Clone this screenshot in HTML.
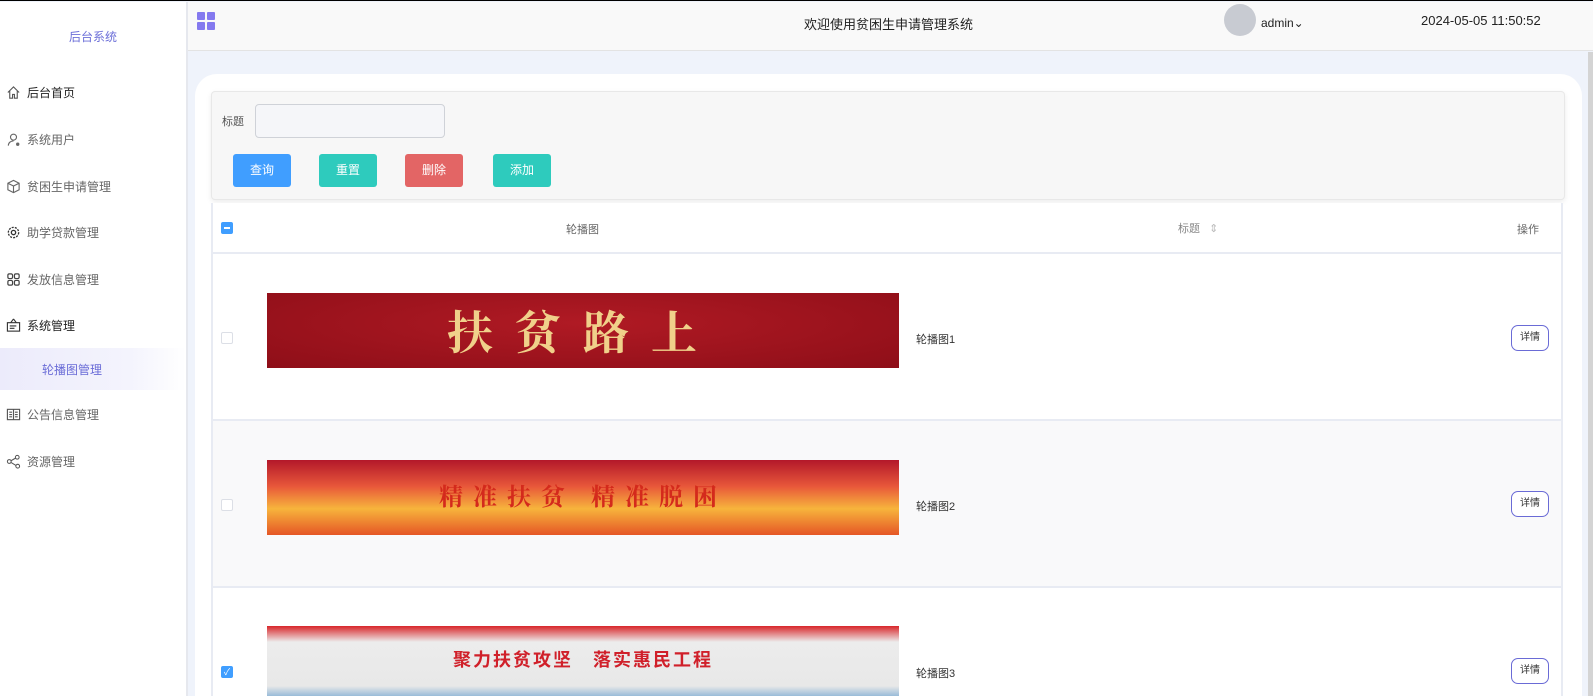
<!DOCTYPE html>
<html style="overflow:hidden;height:696px"><head><meta charset="utf-8"><style>
*{margin:0;padding:0;box-sizing:border-box}
body{width:1593px;height:696px;overflow:hidden;background:#eff3fb;font-family:"Liberation Sans","Noto Sans CJK SC",sans-serif;font-size:12px;color:#333;position:relative;border-top:1px solid #000}
.abs{position:absolute}
.side{left:0;top:1px;width:188px;height:695px;background:#fff;border-right:2px solid #e6e8ee}
.side .t{position:absolute;left:0;width:186px;top:26px;text-align:center;color:#6c6fd8;font-size:12px}
.mi{position:absolute;left:6px;font-size:12px;color:#666;display:flex;align-items:center;gap:6px}
.mi svg{width:15px;height:15px}
.hdr{left:188px;top:1px;width:1405px;height:49px;background:#f9f9f9;border-bottom:1px solid #e3e3e3}
.card{left:195px;top:73px;width:1387px;height:623px;background:#fff;border-radius:22px 22px 0 0}
.search{left:211px;top:90px;width:1354px;height:109px;background:#f7f7f7;border:1px solid #e8e8e8;border-radius:4px;box-shadow:0 2px 6px rgba(0,0,0,.08)}
.btn{position:absolute;top:153px;height:33px;width:58px;border-radius:3px;color:#fff;font-size:12px;text-align:center;line-height:33px}
.tbl{left:211px;top:202px;width:1352px;height:494px;background:#fff;border-left:2px solid #e8ebf3;border-right:2px solid #e8ebf3;overflow:hidden}
.row{position:absolute;left:0;width:1348px;border-bottom:2px solid #e8ebf3}
.cb{position:absolute;left:8px;width:12px;height:12px;border:1px solid #dcdfe6;border-radius:2px;background:#fff}
.img{position:absolute;left:54px;width:632px;height:75px;overflow:hidden}
.lbl{position:absolute;left:703px;font-size:11px;color:#333}
.det{position:absolute;left:1298px;width:38px;height:26px;border:1px solid #6a6bd6;border-radius:7px;font-size:10px;text-align:center;line-height:24px;color:#333;background:#fff}
</style></head><body>
<div class="abs side">
 <div class="t">后台系统</div>
 <div class="mi" style="top:82px;color:#222"><svg viewBox="0 0 16 16" fill="none" stroke="#555" stroke-width="1.2"><path d="M2 8L8 2l6 6M4 6.5V14h3v-4h2v4h3V6.5"/></svg>后台首页</div>
 <div class="mi" style="top:129px"><svg viewBox="0 0 16 16" fill="none" stroke="#666" stroke-width="1.2"><circle cx="8" cy="5.5" r="3.2"/><path d="M2.5 14.5c0-3 2.5-5 5.5-5"/><circle cx="12.5" cy="13" r="1.2" fill="#666"/></svg>系统用户</div>
 <div class="mi" style="top:176px"><svg viewBox="0 0 16 16" fill="none" stroke="#666" stroke-width="1.2"><path d="M8 1.5l6 3v7l-6 3-6-3v-7zM2 4.5l6 3 6-3M8 7.5v7"/></svg>贫困生申请管理</div>
 <div class="mi" style="top:222px"><svg viewBox="0 0 16 16" fill="none" stroke="#333" stroke-width="1.4"><circle cx="8" cy="8" r="2.3"/><circle cx="8" cy="8" r="5.5" stroke-dasharray="2.2 1.2"/></svg>助学贷款管理</div>
 <div class="mi" style="top:269px"><svg viewBox="0 0 16 16" fill="none" stroke="#444" stroke-width="1.3"><rect x="2" y="2" width="5" height="5" rx="1.5"/><rect x="9" y="2" width="5" height="5" rx="1.5"/><rect x="2" y="9" width="5" height="5" rx="1.5"/><rect x="9" y="9" width="5" height="5" rx="1.5"/></svg>发放信息管理</div>
 <div class="mi" style="top:315px;color:#222"><svg viewBox="0 0 16 16" fill="none" stroke="#333" stroke-width="1.2"><path d="M8 1l-3 4M8 1l3 4"/><rect x="1.5" y="5" width="13" height="9"/><path d="M4 8.5h7M4 11h5"/></svg>系统管理</div>
 <div class="abs" style="left:0;top:346px;width:186px;height:42px;background:linear-gradient(90deg,#ecebfb,#f4f4fd 70%,#fff);color:#6a6cd7;font-size:12px;padding:13px 0 0 42px">轮播图管理</div>
 <div class="mi" style="top:404px"><svg viewBox="0 0 16 16" fill="none" stroke="#555" stroke-width="1.2"><rect x="1.5" y="2.5" width="13" height="11"/><path d="M8 2.5v11M3.5 5.5h3M3.5 8h3M3.5 10.5h3M9.5 5.5h3M9.5 8h3M9.5 10.5h3"/></svg>公告信息管理</div>
 <div class="mi" style="top:451px"><svg viewBox="0 0 16 16" fill="none" stroke="#555" stroke-width="1.1"><circle cx="3.5" cy="8" r="2"/><circle cx="12" cy="3.5" r="2"/><circle cx="12.5" cy="13" r="2"/><path d="M5.3 7.2l4.9-2.8M5.3 9l5.3 3.2"/></svg>资源管理</div>
</div>
<div class="abs hdr">
 <svg class="abs" style="left:9px;top:10px" width="18" height="18" viewBox="0 0 18 18" fill="#8479ef"><rect x="0" y="0" width="8" height="8" rx="1"/><rect x="10" y="0" width="8" height="8" rx="1"/><rect x="0" y="10" width="8" height="8" rx="1"/><rect x="10" y="10" width="8" height="8" rx="1"/></svg>
 <div class="abs" style="left:616px;top:12px;font-size:13px;color:#222">欢迎使用贫困生申请管理系统</div>
 <div class="abs" style="left:1036px;top:2px;width:32px;height:32px;border-radius:50%;background:#c8cbd2"></div>
 <div class="abs" style="left:1073px;top:14px;font-size:12px;color:#222">admin⌄</div>
 <div class="abs" style="left:1233px;top:11px;font-size:13px;color:#222">2024-05-05 11:50:52</div>
</div>
<div class="abs" style="left:1588px;top:51px;width:5px;height:645px;background:#d4d4d4"></div>
<div class="abs card"></div>
<div class="abs search">
 <div class="abs" style="left:10px;top:21px;font-size:11px;color:#555">标题</div>
 <div class="abs" style="left:43px;top:12px;width:190px;height:34px;border:1px solid #cfd2d8;border-radius:4px;background:#f5f6f9"></div>
</div>
<div class="btn" style="left:233px;background:#409eff">查询</div>
<div class="btn" style="left:319px;background:#2ecbbd">重置</div>
<div class="btn" style="left:405px;background:#e36565">删除</div>
<div class="btn" style="left:493px;background:#2ecbbd">添加</div>
<div class="abs tbl">
 <div class="row" style="top:0;height:51px">
  <div class="cb" style="top:19px;background:#409eff;border-color:#409eff"><div style="position:absolute;left:2px;top:4px;width:6px;height:2px;background:#fff"></div></div>
  <div class="abs" style="left:353px;top:18px;color:#666;font-size:11px">轮播图</div>
  <div class="abs" style="left:965px;top:17px;color:#888;font-size:11px">标题 <span style="color:#bbb;margin-left:6px">⇕</span></div>
  <div class="abs" style="left:1304px;top:18px;color:#666;font-size:11px">操作</div>
 </div>
 <div class="row" style="top:51px;height:167px;background:#fff">
  <div class="cb" style="top:78px"></div>
  <div class="img" style="top:39px;background:radial-gradient(ellipse at 50% 40%,#b01a24,#8e0e18);color:#f0d08a;font-family:'Noto Serif CJK SC',serif;font-size:46px;font-weight:bold;letter-spacing:22px;text-align:center;line-height:75px">扶贫路上</div>
  <div class="lbl" style="top:77px">轮播图1</div>
  <div class="det" style="top:71px">详情</div>
 </div>
 <div class="row" style="top:218px;height:167px;background:#f9f9fa">
  <div class="cb" style="top:78px"></div>
  <div class="img" style="top:39px;background:linear-gradient(180deg,#b3182a 0%,#e8573a 35%,#f7b43c 65%,#e55626 100%);color:#d42a1c;font-family:'Noto Serif CJK SC',serif;font-size:24px;font-weight:bold;letter-spacing:10px;text-align:center;line-height:70px">精准扶贫 精准脱困</div>
  <div class="lbl" style="top:77px">轮播图2</div>
  <div class="det" style="top:70px">详情</div>
 </div>
 <div class="row" style="top:385px;height:130px;background:#fff;border:none">
  <div class="cb" style="top:78px;background:#409eff;border-color:#409eff;color:#fff;font-size:9px;line-height:10px;text-align:center">✓</div>
  <div class="img" style="top:38px;height:80px;background:linear-gradient(180deg,#d8262a 0%,#ececec 20%,#e8e8e8 75%,#4a8fc9 100%);color:#d0202a;font-size:18px;font-weight:bold;text-align:center;line-height:68px;letter-spacing:2px">聚力扶贫攻坚　落实惠民工程</div>
  <div class="lbl" style="top:77px">轮播图3</div>
  <div class="det" style="top:70px">详情</div>
 </div>
</div>
</body></html>
